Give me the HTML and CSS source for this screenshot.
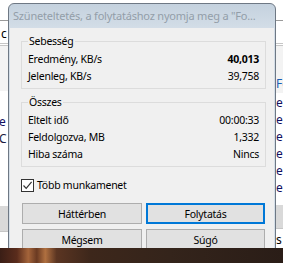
FILE: index.html
```html
<!DOCTYPE html>
<html lang="hu">
<head>
  <meta charset="UTF-8">
  <title>Szüneteltetés</title>
  <link rel="stylesheet" href="styles.css">
</head>
<body>
  <div class="desk">
    <!-- windows behind the dialog -->
    <div class="bgwin bg-left">
      <div class="strip top"></div>
      <div class="strip row-c"><span>c</span></div>
      <div class="strip band"></div>
      <div class="strip list">
        <span class="l1">e</span>
        <span class="l2">C</span>
      </div>
      <div class="strip gray"></div>
      <div class="strip foot"></div>
    </div>
    <div class="bgwin bg-right">
      <div class="strip top"></div>
      <div class="strip row-c"></div>
      <div class="strip band"></div>
      <div class="strip head"><span class="fo">Fo</span></div>
      <div class="strip list">
        <span>e</span><span>e</span><span>e</span><span>e</span><span>e</span><span>e</span>
      </div>
      <div class="strip gray"></div>
      <div class="strip foot"><span>s</span></div>
    </div>

    <!-- progress dialog -->
    <div class="dialog">
      <div class="titlebar">Szüneteltetés, a folytatáshoz nyomja meg a "Fo...</div>
      <div class="client">
        <div class="group">
          <span class="group-label">Sebesség</span>
          <div class="row"><span>Eredmény, KB/s</span><b>40,013</b></div>
          <div class="row"><span>Jelenleg, KB/s</span><span>39,758</span></div>
        </div>
        <div class="group second">
          <span class="group-label">Összes</span>
          <div class="row"><span>Eltelt idő</span><span>00:00:33</span></div>
          <div class="row"><span>Feldolgozva, MB</span><span>1,332</span></div>
          <div class="row"><span>Hiba száma</span><span>Nincs</span></div>
        </div>
        <label class="check">
          <span class="box">
            <svg width="11" height="11" viewBox="0 0 11 11"><path d="M1.5 5.5 L4.2 8.3 L9.6 1.8" fill="none" stroke="#333" stroke-width="1.2"/></svg>
          </span>
          Több munkamenet
        </label>
        <div class="buttons">
          <button>Háttérben</button>
          <button class="default">Folytatás</button>
          <button>Mégsem</button>
          <button>Súgó</button>
        </div>
      </div>
    </div>

    <div class="photo"></div>
  </div>
</body>
</html>
```

FILE: styles.css
```css
/* Base */
* { box-sizing: border-box; margin: 0; padding: 0; }
body { font-family: 'Noto Sans', 'DejaVu Sans', sans-serif; font-size: 10.5px; letter-spacing: -0.25px; color: #000; background: #fff; }
.desk { position: relative; width: 283px; height: 263px; overflow: hidden; background: #fff; }

/* Background windows */
.bgwin { position: absolute; top: 0; display: flex; flex-direction: column; font-size: 12px; line-height: 17px; letter-spacing: 0; }
.bg-left { left: 0; width: 20px; }
.bg-right { left: 276px; width: 20px; }
.strip { background: #fff; overflow: hidden; }
.strip.top { height: 21px; border-bottom: 1px solid #9a9a9a; }
.strip.row-c { height: 25px; padding-top: 4px; border-bottom: 3px double #c6c6c6; }
.bg-left .row-c span { display: block; padding-left: 1px; }
.strip.band { height: 29px; background: #f3f3f3; }
.bg-left .strip.band { height: 45px; }
.strip.head { height: 18px; background: #f3f3f3; color: #1a5fb4; }
.strip.list { height: 115px; display: flex; flex-direction: column; color: #101060; }
.bg-right .strip.list { height: 112px; padding-top: 1px; }
.bg-left .l1 { margin-top: 22px; margin-left: -1px; }
.bg-left .l2 { margin-left: -1px; color: #1a1a40; }
.strip.gray { height: 25px; background: #d9d9d9; }
.bg-right .strip.gray { height: 23px; }
.strip.foot { height: 20px; border-top: 1px solid #c6c6c6; padding-top: 2px; }

/* Dialog frame */
.dialog { position: absolute; left: 8px; top: 3px; width: 268px; height: 262px; border: 1px solid #6e7884; border-radius: 6px 6px 0 0; background: linear-gradient(#c4d1de, #d3dde7 24px, #d6e0e9); }
.titlebar { height: 24px; line-height: 24px; padding-left: 4px; color: #939ea9; font-size: 11px; letter-spacing: -0.2px; white-space: nowrap; overflow: hidden; }
.client { margin: 0 1px; height: 240px; background: #f0f0f0; padding: 13px 0 0 11px; }

/* Group boxes */
.group { position: relative; width: 245px; border: 1px solid #dcdcdc; padding: 9px 6px 3px; }
.group.second { margin-top: 13px; }
.group-label { position: absolute; top: -8px; left: 6px; padding: 0 1px; line-height: 15px; background: #f0f0f0; }
.row { display: flex; justify-content: space-between; height: 17px; line-height: 17px; white-space: nowrap; }
.row b { font-weight: 700; }

/* Checkbox */
.check { display: flex; align-items: center; height: 13px; margin-top: 12px; line-height: 13px; }
.check .box { width: 13px; height: 13px; border: 1px solid #333; background: #fff; margin-right: 3px; display: flex; align-items: center; justify-content: center; }

/* Buttons */
.buttons { display: grid; grid-template-columns: 120px 119px; grid-auto-rows: 21px; column-gap: 4px; row-gap: 5px; margin: 11px 0 0 1px; }
.buttons button { font-family: inherit; font-size: 10.5px; letter-spacing: -0.25px; color: #000; background: #e1e1e1; border: 1px solid #adadad; }
.buttons button.default { border: 2px solid #0078d7; }

/* Wallpaper strip at the bottom */
.photo { position: absolute; left: 0; top: 248px; width: 283px; height: 15px; background: linear-gradient(90deg, #3a1e16 0, #5a2c1c 6%, #a4643a 10%, #6a3a22 13%, #b07040 16%, #5b3522 20%, #3d271b 32%, #34241b 60%, #2a1d17 100%); }
```
